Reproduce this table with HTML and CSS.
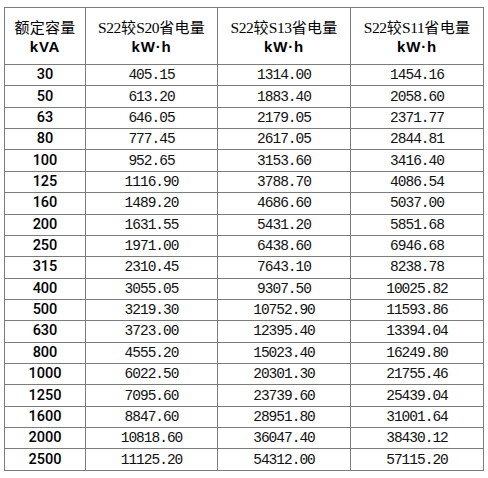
FILE: index.html
```html
<!DOCTYPE html>
<html lang="zh">
<head>
<meta charset="utf-8">
<link rel="stylesheet" href="styles.css">
</head>
<body>
<table class="grid">
  <colgroup>
    <col class="c1"><col class="c2"><col class="c3"><col class="c4">
  </colgroup>
  <thead>
    <tr>
      <th><span class="zh">额定容量</span><br><span class="unit">kVA</span></th>
      <th><span class="lat">S22</span><span class="zh">较</span><span class="lat">S20</span><span class="zh">省电量</span><br><span class="unit">kW·h</span></th>
      <th><span class="lat">S22</span><span class="zh">较</span><span class="lat">S13</span><span class="zh">省电量</span><br><span class="unit">kW·h</span></th>
      <th><span class="lat">S22</span><span class="zh">较</span><span class="lat">S11</span><span class="zh">省电量</span><br><span class="unit">kW·h</span></th>
    </tr>
  </thead>
  <tbody>
    <tr><td class="cap">30</td><td>405.15</td><td>1314.00</td><td>1454.16</td></tr>
    <tr><td class="cap">50</td><td>613.20</td><td>1883.40</td><td>2058.60</td></tr>
    <tr><td class="cap">63</td><td>646.05</td><td>2179.05</td><td>2371.77</td></tr>
    <tr><td class="cap">80</td><td>777.45</td><td>2617.05</td><td>2844.81</td></tr>
    <tr><td class="cap">100</td><td>952.65</td><td>3153.60</td><td>3416.40</td></tr>
    <tr><td class="cap">125</td><td>1116.90</td><td>3788.70</td><td>4086.54</td></tr>
    <tr><td class="cap">160</td><td>1489.20</td><td>4686.60</td><td>5037.00</td></tr>
    <tr><td class="cap">200</td><td>1631.55</td><td>5431.20</td><td>5851.68</td></tr>
    <tr><td class="cap">250</td><td>1971.00</td><td>6438.60</td><td>6946.68</td></tr>
    <tr><td class="cap">315</td><td>2310.45</td><td>7643.10</td><td>8238.78</td></tr>
    <tr><td class="cap">400</td><td>3055.05</td><td>9307.50</td><td>10025.82</td></tr>
    <tr><td class="cap">500</td><td>3219.30</td><td>10752.90</td><td>11593.86</td></tr>
    <tr><td class="cap">630</td><td>3723.00</td><td>12395.40</td><td>13394.04</td></tr>
    <tr><td class="cap">800</td><td>4555.20</td><td>15023.40</td><td>16249.80</td></tr>
    <tr><td class="cap">1000</td><td>6022.50</td><td>20301.30</td><td>21755.46</td></tr>
    <tr><td class="cap">1250</td><td>7095.60</td><td>23739.60</td><td>25439.04</td></tr>
    <tr><td class="cap">1600</td><td>8847.60</td><td>28951.80</td><td>31001.64</td></tr>
    <tr><td class="cap">2000</td><td>10818.60</td><td>36047.40</td><td>38430.12</td></tr>
    <tr><td class="cap">2500</td><td>11125.20</td><td>54312.00</td><td>57115.20</td></tr>
  </tbody>
</table>
</body>
</html>
```
FILE: styles.css
```css
html, body {
  margin: 0;
  padding: 0;
  background: #fff;
}
body {
  padding: 7px 0 0 4px;
  color: #000;
}
.grid {
  border-collapse: collapse;
  table-layout: fixed;
  width: 479px;
}
.c1 { width: 81px; }
.c2 { width: 132px; }
.c3 { width: 133px; }
.c4 { width: 133px; }
.grid th, .grid td {
  border: 1px solid #7c7c7c;
  padding: 0;
  text-align: center;
  vertical-align: middle;
}
.grid th {
  height: 56px;
  font-weight: normal;
  line-height: 19px;
}
.zh {
  font-family: "Noto Sans CJK SC", sans-serif;
  font-size: 15px;
  letter-spacing: 0.3px;
}
.lat {
  font-family: "Liberation Serif", serif;
  font-size: 15.5px;
  letter-spacing: -0.4px;
}
.unit {
  font-family: "Liberation Sans", sans-serif;
  font-weight: bold;
  font-size: 15px;
  letter-spacing: 0.8px;
}
.grid td {
  height: 20.37px;
  font-family: "Liberation Mono", monospace;
  font-size: 14.5px;
  letter-spacing: -1px;
  line-height: 18px;
  color: #111;
}
.grid td.cap {
  font-family: Roboto, "Liberation Sans", sans-serif;
  font-size: 14.5px;
  letter-spacing: 0;
  font-weight: 500;
  color: #000;
}
```
